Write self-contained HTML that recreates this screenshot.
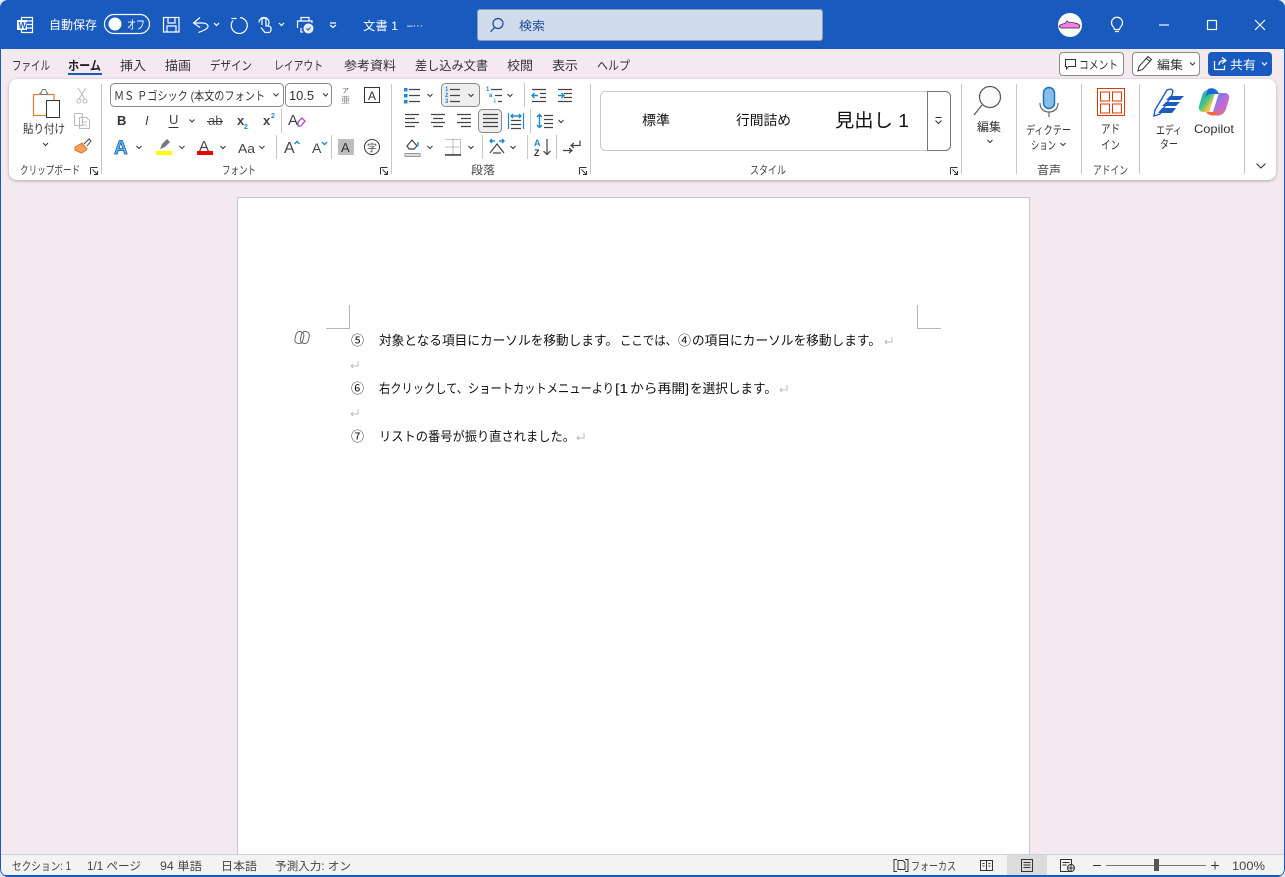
<!DOCTYPE html>
<html lang="ja"><head><meta charset="utf-8"><title>文書 1 - Word</title>
<style>
html,body{margin:0;padding:0;width:1285px;height:877px;overflow:hidden;background:#e8e8e8}
#win{position:absolute;left:0;top:0;width:1285px;height:877px;background:#f3e9ef;border-radius:8px;overflow:hidden;box-sizing:border-box;}
#title{position:absolute;left:0;top:0;width:1285px;height:49px;background:#185abd}
#search{position:absolute;left:477px;top:9px;width:346px;height:32px;box-sizing:border-box;background:#d0dbec;border:1px solid #8c9db8;border-radius:3px}
#ribbon{position:absolute;left:9px;top:79px;width:1267px;height:101px;background:#fff;border-radius:8px;box-shadow:0 1px 3px rgba(0,0,0,.28)}
#page{position:absolute;left:237px;top:197px;width:793px;height:670px;box-sizing:border-box;background:#fff;border:1px solid #c8c6c8}
#status{position:absolute;left:0;top:854px;width:1285px;height:23px;box-sizing:border-box;background:#f3f3f3;border-top:1px solid #d0d0d0;border-bottom:2px solid #185abd}
#edge{position:absolute;left:0;top:0;width:1285px;height:877px;box-sizing:border-box;border:1px solid #185abd;border-radius:8px;pointer-events:none}
svg{position:absolute;left:0;top:0}
text{font-family:"Liberation Sans","Noto Sans CJK JP",sans-serif;font-size:12px;fill:#333;white-space:pre}
.t{fill:#fff}
.tab{font-size:12.5px;fill:#333}
.lab{font-size:11.5px;fill:#444}
.doc{font-size:13px;fill:#111}
.st{font-size:11.5px;fill:#444}
.k{stroke:#333;fill:none;stroke-width:1}
.g{stroke:#444;fill:none;stroke-width:1.2}
.b{stroke:#1e88d2;fill:none;stroke-width:1.4}
.w{stroke:#fff;fill:none;stroke-width:1.2}
.s{stroke:#c8c8c8;fill:none;stroke-width:1}
.c{stroke:#333;fill:none;stroke-width:1}
.r{stroke:#bbb;fill:none;stroke-width:1}
</style></head><body>
<div id="win">
<div id="title"></div>
<div id="search"></div>
<div id="ribbon"></div>
<div id="page"></div>
<div id="status"></div>
<svg width="1285" height="877" viewBox="0 0 1285 877" xmlns="http://www.w3.org/2000/svg">
<defs>
<linearGradient id="cp" x1="0" y1="0" x2="1" y2="1"><stop offset="0" stop-color="#1d9fe0"/><stop offset=".45" stop-color="#3cc48a"/><stop offset=".7" stop-color="#f6c544"/><stop offset="1" stop-color="#f0603a"/></linearGradient>
<linearGradient id="cp2" x1="0" y1="0" x2="1" y2="1"><stop offset="0" stop-color="#3f8fe8"/><stop offset=".5" stop-color="#b86ae0"/><stop offset="1" stop-color="#f07070"/></linearGradient>
</defs>

<!-- Title bar -->
<path class="w" d="M21.5 17.5h11v15h-11z"/><path class="w" d="M27 21h5.500M27 24.500h5.500M27 28h5.500"/>
<rect x="17" y="20" width="10" height="10" fill="#fff"/><text x="18.500" y="28.500" style="font-size:9px;font-weight:700;fill:#185abd">W</text>
<text class="t" x="49" y="29" lengthAdjust="spacingAndGlyphs" textLength="48">自動保存</text>
<rect x="104.500" y="14.500" width="45" height="19" rx="9.500" class="w"/><circle cx="115" cy="24" r="6.500" fill="#fff"/>
<text class="t" x="127" y="29" lengthAdjust="spacingAndGlyphs" textLength="18">オフ</text>
<path class="w" stroke-width="1.200" d="M163.500 17.500h15.500v14.500h-15.500zM168 17.500v5.500h7v-5.500M167 32v-6h9v6"/>
<path class="w" stroke-width="1.300" d="M200 17.500l-6.500 5.500 6.500 4.500M193.500 23h8.500c4 0 6 1.500 6 3.500 0 2-4 4-9.500 6"/>
<path class="w" d="M214 23l2.500 2.500 2.500-2.500"/>
<path class="w" stroke-width="1.300" d="M236.500 18.500h-5M233 20.500A8 8 0 1 0 240 17.500"/>
<path class="w" d="M259 22.500a5 5 0 0 1 10 0 3 3 0 0 1-1 2.500M262 25v-5a2 2 0 0 1 4 0v6h2.500a2.500 2.500 0 0 1 2.500 2.500v1.500a2.500 2.500 0 0 1-2.500 2.500h-3.500l-4-5"/>
<path class="w" d="M279 23l2.500 2.500 2.500-2.500"/>
<path class="w" d="M301 21v-3.500h8v3.500M297.500 28v-7h14.500v2M301 28v4h2"/><circle cx="308.500" cy="28.500" r="4.500" fill="#dfe8f5" stroke="#fff"/><path d="M306.500 28.500l1.500 1.500 2.500-2.500" fill="none" stroke="#185abd"/>
<path class="w" d="M330 23h6M330 25l3 2.500 3-2.500"/>
<text class="t" x="363" y="30" lengthAdjust="spacingAndGlyphs" textLength="35" style="font-size:12px">文書 1</text>
<text class="t" x="407" y="29" style="font-size:11px" lengthAdjust="spacingAndGlyphs" textLength="16">–···</text>

<circle cx="498" cy="23.500" r="5" fill="none" stroke="#1b4b96" stroke-width="1.200"/><path d="M494.500 27.500l-4 4.500" stroke="#1b4b96" stroke-width="1.200"/>
<text x="519" y="30" lengthAdjust="spacingAndGlyphs" textLength="26" style="fill:#1b4b96">検索</text>

<circle cx="1070" cy="25" r="12" fill="#fdfdfb"/>
<path d="M1059 26.500c1-2.500 4-2.500 6-3l2-2.500 2 1.500c4 0 9 .5 11 3l-1 2.500h-18z" fill="#f67df0" stroke="#222" stroke-width=".7"/>
<path class="w" d="M1113 26.500a5.500 5.500 0 1 1 8 0c-1 1-1.300 2-1.500 3h-5c-.2-1-.5-2-1.500-3zM1115 31.500h4"/>
<path class="w" d="M1159 25h10"/><rect x="1207.500" y="20.500" width="9" height="9" class="w"/><path class="w" d="M1255 20l10 10M1265 20l-10 10"/>

<!-- Tabs -->
<text class="tab" x="12" y="70" lengthAdjust="spacingAndGlyphs" textLength="38">ファイル</text>
<text class="tab" x="68" y="70" lengthAdjust="spacingAndGlyphs" textLength="33" style="font-weight:700;fill:#222">ホーム</text>
<rect x="68" y="73" width="34" height="2" fill="#185abd"/>
<text class="tab" x="120" y="70" lengthAdjust="spacingAndGlyphs" textLength="26">挿入</text>
<text class="tab" x="165" y="70" lengthAdjust="spacingAndGlyphs" textLength="26">描画</text>
<text class="tab" x="210" y="70" lengthAdjust="spacingAndGlyphs" textLength="42">デザイン</text>
<text class="tab" x="274" y="70" lengthAdjust="spacingAndGlyphs" textLength="49">レイアウト</text>
<text class="tab" x="344" y="70" lengthAdjust="spacingAndGlyphs" textLength="52">参考資料</text>
<text class="tab" x="415" y="70" lengthAdjust="spacingAndGlyphs" textLength="73">差し込み文書</text>
<text class="tab" x="507" y="70" lengthAdjust="spacingAndGlyphs" textLength="26">校閲</text>
<text class="tab" x="552" y="70" lengthAdjust="spacingAndGlyphs" textLength="26">表示</text>
<text class="tab" x="597" y="70" lengthAdjust="spacingAndGlyphs" textLength="33">ヘルプ</text>

<rect x="1059.500" y="52.500" width="64" height="23" rx="3.500" fill="#fff" stroke="#8a8a8a"/>
<path class="k" d="M1065.500 59.500h10v7h-7l-2 2.500v-2.500h-1z"/>
<text x="1079" y="69" lengthAdjust="spacingAndGlyphs" textLength="39">コメント</text>
<rect x="1132.500" y="52.500" width="67" height="23" rx="3.500" fill="#fff" stroke="#8a8a8a"/>
<path class="k" d="M1138 71l1-4.500 9-10 3.500 3-9 10zM1146.500 58.500l3.500 3"/>
<text x="1157" y="69" lengthAdjust="spacingAndGlyphs" textLength="26">編集</text><path class="c" d="M1190 62.500l2.500 2.500 2.500-2.500"/>
<rect x="1208" y="52" width="64" height="24" rx="4" fill="#185abd"/>
<path class="w" d="M1214.500 61v8.500h10v-4M1219 65c0-3 2-4.500 5.500-4.500M1222 57.500l4 3-4 3"/>
<text class="t" x="1230" y="69" lengthAdjust="spacingAndGlyphs" textLength="26">共有</text><path class="w" d="M1262 62.500l2.500 2.500 2.500-2.500"/>

<!-- Separators -->
<path class="s" d="M101.500 84v90M391.500 84v90M590.500 84v90M961.500 84v90M1016.500 84v90M1081.500 84v90M1139.500 84v90M1244.500 84v90"/>
<path class="s" d="M281.500 109v24M276.500 135v24M331.500 135v24M524.500 83v24M530.500 109v24M482.500 135v24M527.500 135v24M556.500 135v24"/>

<!-- Clipboard -->
<path d="M33.500 94.500h6l1-2h6.500l1 2h6v21h-20.500z" fill="#fff" stroke="#d9873a" stroke-width="1.300"/>
<path d="M40.500 94.500l2-5h3l2 5z" fill="#fff" stroke="#777"/>
<rect x="46.500" y="100.500" width="13" height="17" fill="#fff" stroke="#333"/>
<text x="23" y="133" lengthAdjust="spacingAndGlyphs" textLength="42">貼り付け</text><path class="c" d="M43 143l2.500 2.500 2.500-2.500"/>
<path class="r" stroke="#b5b5b5" d="M78 88l7 11M86 88l-7 11"/><circle cx="79" cy="101" r="2" class="r"/><circle cx="85" cy="101" r="2" class="r"/>
<path class="r" d="M74.500 113.500h8l0 12h-8zM79.500 117.500h7l3 3v8h-10zM82 122h5M82 125h5"/>
<path d="M75 147l7-4 5 6-5 4-3-1-4-2z" fill="#f3a35c" stroke="#d9732a"/><path d="M84 144l5-5 2 2-4 5" fill="#fff" stroke="#444"/>
<text class="lab" x="20" y="174" lengthAdjust="spacingAndGlyphs" textLength="60">クリップボード</text>
<path class="k" stroke="#555" d="M90.500 167.500h7M90.500 167.500v7M92.500 169.500l5 5M94 174.500h3.500v-3.500"/>

<!-- Font -->
<rect x="110.500" y="83.500" width="173" height="23" rx="4" fill="#fff" stroke="#8a8a8a"/>
<text x="114" y="100" lengthAdjust="spacingAndGlyphs" textLength="151" style="font-size:12px">ＭＳ Ｐゴシック (本文のフォント</text>
<path class="c" d="M273.500 93.500l2.500 2.500 2.500-2.500"/>
<rect x="285.500" y="83.500" width="46" height="23" rx="4" fill="#fff" stroke="#8a8a8a"/>
<text x="289" y="100" lengthAdjust="spacingAndGlyphs" textLength="25" style="font-size:12.500px">10.5</text>
<path class="c" d="M323 93.500l2.500 2.500 2.500-2.500"/>
<text x="342" y="93" style="font-size:7px;fill:#666">ア</text><text x="341" y="103" style="font-size:9px;fill:#888">亜</text>
<rect x="364.500" y="87.500" width="15" height="15" fill="none" stroke="#333"/><text x="368" y="100" style="font-size:12px">A</text>

<text x="117" y="125" style="font-size:13px;font-weight:700">B</text>
<text x="145" y="125" style="font-size:13px;font-style:italic;fill:#444">I</text>
<text x="169" y="124" style="font-size:13px;fill:#444">U</text><path class="c" d="M168.500 127.500h10"/>
<path class="c" d="M189.500 119.500l2.500 2.500 2.500-2.500"/>
<text x="208" y="125" style="font-size:13px;fill:#555">ab</text><path class="c" d="M207 121.500h16"/>
<text x="237" y="125" style="font-size:13px;font-weight:700;fill:#444">x</text><text x="244" y="129" style="font-size:7px;fill:#1e88d2;font-weight:700">2</text>
<text x="263" y="125" style="font-size:13px;font-weight:700;fill:#444">x</text><text x="271" y="118" style="font-size:7px;fill:#1e88d2;font-weight:700">2</text>
<text x="288" y="125" style="font-size:15px;fill:#444">A</text><path d="M298 122l4-4 3 3-4 5h-3z" fill="none" stroke="#a44cc0" stroke-width="1.300"/>

<text x="114" y="154" style="font-size:19px;font-weight:700;fill:#5fb3ea;stroke:#0f5fa8;stroke-width:.7">A</text>
<path class="c" d="M136.500 146l2.500 2.500 2.500-2.500"/>
<path d="M160 149l2-5 5-5 3 3-5 5z" fill="#777"/><rect x="156" y="151" width="16" height="4" fill="#ff0"/>
<path class="c" d="M179.500 146l2.500 2.500 2.500-2.500"/>
<text x="199" y="151" style="font-size:15px;fill:#444">A</text><rect x="197" y="151" width="16" height="4" fill="#e00"/>
<path class="c" d="M220.500 146l2.500 2.500 2.500-2.500"/>
<text x="238" y="153" lengthAdjust="spacingAndGlyphs" textLength="17" style="font-size:13px;fill:#444">Aa</text><path class="c" d="M259.500 146l2.500 2.500 2.500-2.500"/>
<text x="284" y="153" style="font-size:16px;fill:#444">A</text><path class="b" stroke-width="1" d="M294.500 144l2.500-2.500 2.500 2.500"/>
<text x="312" y="153" style="font-size:14px;fill:#444">A</text><path class="b" stroke-width="1" d="M322 142l2.500 2.500 2.500-2.500"/>
<rect x="338" y="139" width="16" height="16" fill="#bdbdbd"/><text x="341" y="152" style="font-size:13px;fill:#333">A</text>
<circle cx="372" cy="147" r="7.500" class="k" stroke="#555"/><text x="367" y="151.500" style="font-size:10px;fill:#444">字</text>
<text class="lab" x="222" y="174" lengthAdjust="spacingAndGlyphs" textLength="34">フォント</text>
<path class="k" stroke="#555" d="M380.500 167.500h7M380.500 167.500v7M382.500 169.500l5 5M384 174.500h3.500v-3.500"/>

<!-- Paragraph -->
<g fill="#1e88d2"><rect x="404" y="88" width="3.500" height="3.500"/><rect x="404" y="94" width="3.500" height="3.500"/><rect x="404" y="100" width="3.500" height="3.500"/></g>
<path class="g" d="M409 89.500h11M409 95.500h11M409 101.500h11"/><path class="c" d="M427.500 94l2.500 2.500 2.500-2.500"/>
<rect x="441.500" y="83.500" width="38" height="23" rx="4" fill="#eee" stroke="#8a8a8a"/>
<text x="445" y="91" style="font-size:6px;fill:#1e88d2;font-weight:700">1</text><text x="445" y="97" style="font-size:6px;fill:#1e88d2;font-weight:700">2</text><text x="445" y="103" style="font-size:6px;fill:#1e88d2;font-weight:700">3</text>
<path class="g" d="M450 89.500h10M450 95.500h10M450 101.500h10"/><path class="c" d="M468.500 94l2.500 2.500 2.500-2.500"/>
<text x="486" y="91" style="font-size:6px;fill:#1e88d2;font-weight:700">1</text><text x="489" y="97" style="font-size:6px;fill:#1e88d2;font-weight:700">a</text><text x="494" y="103" style="font-size:6px;fill:#1e88d2;font-weight:700">i</text>
<path class="g" d="M491 89.500h11M495 95.500h7M498 101.500h4"/><path class="c" d="M507.500 94l2.500 2.500 2.500-2.500"/>
<path class="g" d="M532 89.500h14M540 93.500h6M540 97.500h6M532 101.500h14"/><path class="b" d="M538 95.500h-6M534.500 93l-2.500 2.500 2.500 2.500"/>
<path class="g" d="M558 89.500h14M564 93.500h8M564 97.500h8M558 101.500h14"/><path class="b" d="M558 95.500h6M561.500 93l2.500 2.500-2.500 2.500"/>

<path class="g" d="M405 114.500h14M405 118.500h10M405 122.500h14M405 126.500h10"/>
<path class="g" d="M431 114.500h14M433 118.500h10M431 122.500h14M433 126.500h10"/>
<path class="g" d="M457 114.500h14M461 118.500h10M457 122.500h14M461 126.500h10"/>
<rect x="478.500" y="109.500" width="23" height="23" rx="4" fill="#eee" stroke="#8a8a8a"/>
<path class="g" d="M483 114.500h15M483 118.500h15M483 122.500h15M483 126.500h15"/>
<path d="M508.500 113v16M523.500 113v16" stroke="#1e88d2" stroke-width="1.200" fill="none"/><path class="g" d="M511 120.500h10M511 124.500h10M511 128.500h10"/><path class="b" stroke-width="1" d="M511 116h10M513 114l-2 2 2 2M519 114l2 2-2 2"/>
<path class="b" d="M539.500 115v12M537 117l2.500-2.500 2.500 2.500M537 125l2.500 2.500 2.500-2.500"/><path class="g" d="M544 115.500h9M544 119.500h9M544 123.500h9M544 127.500h9"/>
<path class="c" d="M558.500 120l2.500 2.500 2.500-2.500"/>

<path d="M405 153.500h15v3h-15z" fill="#ddd" stroke="#999"/><path class="g" d="M407 146l5-6 5 6-3 3h-5z"/><path class="b" d="M418 146v-4"/>
<path class="c" d="M427.500 146l2.500 2.500 2.500-2.500"/>
<path d="M445.500 139.500h15v15h-15M453 139.500v15M445.500 147h15" fill="none" stroke="#888" stroke-dasharray="1 1"/><path d="M445 155h16" stroke="#222" stroke-width="1.300"/>
<path class="c" d="M468.500 146l2.500 2.500 2.500-2.500"/>
<path class="g" d="M490 153l7-9 7 9M493 153h8"/><path class="b" stroke-width="1" d="M490 141h5M492 139l-2 2 2 2M504 141h-5M502 139l2 2-2 2"/>
<path class="c" d="M510.500 146l2.500 2.500 2.500-2.500"/>
<text x="534" y="146" style="font-size:9px;font-weight:700;fill:#1e88d2">A</text><text x="534" y="156" style="font-size:9px;font-weight:700;fill:#333">Z</text>
<path class="g" d="M547 139v15M543.500 151l3.500 3.500 3.500-3.500"/>
<path class="g" d="M580 140.500v5h-9M574 143l-3 2.500 3 2.500M563 150.500h9M569 148l3 2.500-3 2.500"/>
<text class="lab" x="471" y="174" lengthAdjust="spacingAndGlyphs" textLength="24">段落</text>
<path class="k" stroke="#555" d="M579.500 167.500h7M579.500 167.500v7M581.500 169.500l5 5M583 174.500h3.500v-3.500"/>

<!-- Styles -->
<rect x="600.500" y="91.500" width="350" height="59" rx="5" fill="#fff" stroke="#c9c9c9"/>
<path d="M927.500 91.500h18a5 5 0 0 1 5 5v49a5 5 0 0 1-5 5h-18z" fill="#fff" stroke="#777"/>
<path class="c" d="M935.500 117.500h6M935.500 120.500l3 3 3-3"/>
<text x="642" y="125" lengthAdjust="spacingAndGlyphs" textLength="28" style="font-size:13.500px;fill:#111">標準</text>
<text x="736" y="125" lengthAdjust="spacingAndGlyphs" textLength="55" style="font-size:13.500px;fill:#111">行間詰め</text>
<text x="835" y="127" lengthAdjust="spacingAndGlyphs" textLength="74" style="font-size:18.500px;fill:#111">見出し 1</text>
<text class="lab" x="750" y="174" lengthAdjust="spacingAndGlyphs" textLength="36">スタイル</text>
<path class="k" stroke="#555" d="M950.500 167.500h7M950.500 167.500v7M952.500 169.500l5 5M954 174.500h3.500v-3.500"/>

<!-- Edit -->
<circle cx="990" cy="97" r="10.500" fill="#fafafa" stroke="#555" stroke-width="1.200"/><path d="M982 105l-8 10" stroke="#555" stroke-width="1.200"/>
<text x="977" y="131" lengthAdjust="spacingAndGlyphs" textLength="24">編集</text><path class="c" d="M987.500 140l2.500 2.500 2.500-2.500"/>

<!-- Dictation -->
<rect x="1043.500" y="87.500" width="11" height="21" rx="5.500" fill="#86bdea" stroke="#1a6fb8" stroke-width="1.500"/>
<path d="M1040 103c0 6 4 9 9 9s9-3 9-9M1049 112v5" fill="none" stroke="#666" stroke-width="1.200"/>
<text x="1026" y="134" lengthAdjust="spacingAndGlyphs" textLength="45" style="font-size:11.500px">ディクテー</text>
<text x="1031" y="149" lengthAdjust="spacingAndGlyphs" textLength="25" style="font-size:11.500px">ション</text><path class="c" d="M1060.500 143l2.500 2.500 2.500-2.500"/>
<text class="lab" x="1037" y="174" lengthAdjust="spacingAndGlyphs" textLength="24">音声</text>

<!-- Add-in -->
<rect x="1097.500" y="88.500" width="27" height="27" fill="#fff" stroke="#d83b01" stroke-width="1"/>
<path d="M1100.500 92h9v9h-9zM1112.500 92h9v9h-9zM1100.500 104h9v9h-9zM1112.500 104h9v9h-9z" fill="none" stroke="#d83b01"/>
<text x="1101" y="133" lengthAdjust="spacingAndGlyphs" textLength="19">アド</text><text x="1101" y="149" lengthAdjust="spacingAndGlyphs" textLength="19">イン</text>
<text class="lab" x="1093" y="174" lengthAdjust="spacingAndGlyphs" textLength="35">アドイン</text>

<!-- Editor -->
<path d="M1154 116l1-6 12-20 4-1 2 2-1 4-12 19z" fill="#fff" stroke="#1c5cc0" stroke-width="1.400"/>
<path d="M1166 100h14l4-4h-14zM1162 106h14l4-4h-14zM1158 113h14l4-5h-14z" fill="#1c5cc0"/>
<text x="1156" y="134" lengthAdjust="spacingAndGlyphs" textLength="26" style="font-size:11.500px">エディ</text><text x="1160" y="148" lengthAdjust="spacingAndGlyphs" textLength="18" style="font-size:11.500px">ター</text>

<!-- Copilot -->
<path d="M1214 90c-6-2-11 1-12 6l-3 10c-1 3 1 6 4 6h6l7-22z" fill="url(#cp)"/>
<path d="M1214 115c6 2 10-1 12-6l3-10c1-3-1-6-4-6h-6l-7 22z" fill="url(#cp2)"/>
<path d="M1208 89c5-2 9 0 11 5h-8c-3 0-5 2-6 5l2-7z" fill="#1a68d8"/>
<path d="M1206 112h8c3 0 5-2 6-5l-2 6c-2 3-8 4-12-1z" fill="#f26a3d"/>
<text x="1194" y="133" lengthAdjust="spacingAndGlyphs" textLength="40">Copilot</text>
<path d="M1256.500 163.500l4.500 4.500 4.500-4.500" fill="none" stroke="#333" stroke-width="1.100"/>

<!-- Document -->
<path d="M349.500 305v23.500H326M917.500 305v23.500H941" fill="none" stroke="#b8b8b8"/>
<g fill="none" stroke="#666"><rect x="295.500" y="331.500" width="8" height="12" rx="3.500" transform="rotate(14 299 337)"/><rect x="301" y="331.500" width="8" height="12" rx="3.500" transform="rotate(14 305 337)"/></g>
<text class="doc" x="351" y="345">⑤</text>
<text class="doc" x="379" y="345" lengthAdjust="spacingAndGlyphs" textLength="239">対象となる項目にカーソルを移動します。</text>
<text class="doc" x="620" y="345" lengthAdjust="spacingAndGlyphs" textLength="57">ここでは、</text>
<text class="doc" x="678" y="345" lengthAdjust="spacingAndGlyphs" textLength="13">④</text>
<text class="doc" x="692" y="345" lengthAdjust="spacingAndGlyphs" textLength="189">の項目にカーソルを移動します。</text>
<text class="doc" x="351" y="393">⑥</text>
<text class="doc" x="379" y="393" lengthAdjust="spacingAndGlyphs" textLength="235">右クリックして、ショートカットメニューより</text>
<text class="doc" x="615" y="393" lengthAdjust="spacingAndGlyphs" textLength="13">[1</text>
<text class="doc" x="630" y="393" lengthAdjust="spacingAndGlyphs" textLength="59">から再開]</text>
<text class="doc" x="690" y="393" lengthAdjust="spacingAndGlyphs" textLength="87">を選択します。</text>
<text class="doc" x="351" y="441">⑦</text>
<text class="doc" x="379" y="441" lengthAdjust="spacingAndGlyphs" textLength="196">リストの番号が振り直されました。</text>
<g class="r"><path class="r" d="M892 337v5h-7M887 340l-2 2 2 2"/><path class="r" d="M358 361v5h-7M353 364l-2 2 2 2"/><path class="r" d="M787 385v5h-7M782 388l-2 2 2 2"/><path class="r" d="M358 409v5h-7M353 412l-2 2 2 2"/><path class="r" d="M584 433v5h-7M579 436l-2 2 2 2"/></g>

<!-- Status bar -->
<text class="st" x="12" y="870" lengthAdjust="spacingAndGlyphs" textLength="59">セクション: 1</text>
<text class="st" x="87" y="870" lengthAdjust="spacingAndGlyphs" textLength="54">1/1 ページ</text>
<text class="st" x="160" y="870" lengthAdjust="spacingAndGlyphs" textLength="42">94 単語</text>
<text class="st" x="221" y="870" lengthAdjust="spacingAndGlyphs" textLength="36">日本語</text>
<text class="st" x="275" y="870" lengthAdjust="spacingAndGlyphs" textLength="76">予測入力: オン</text>
<path class="k" d="M897 859.500h-3v12h3M905 859.500h3v12h-3"/><path class="k" d="M898 860.500h5l2 2v7h-7z"/>
<text class="st" x="911" y="870" lengthAdjust="spacingAndGlyphs" textLength="45">フォーカス</text>
<path class="k" d="M980.500 860.500h12v10h-12zM986.500 860.500v10M982.500 863.500h2M982.500 866h2M988.500 863.500h2M988.500 866h2"/>
<rect x="1007" y="855" width="40" height="20" fill="#dcdcdc"/>
<path class="k" d="M1021.500 859.500h11v12h-11zM1023.500 862.500h7M1023.500 865h7M1023.500 867.500h7"/>
<path class="k" d="M1060.500 859.500h11v12h-11zM1062.500 862.500h7M1062.500 865h4"/><circle cx="1071" cy="868" r="3.500" fill="#f3f3f3" stroke="#333"/><path class="k" d="M1067.500 868h7M1071 864.500v7"/>
<path class="k" d="M1093 865.500h8M1211 865.500h8M1215 861.500v8"/>
<path d="M1106 865.500h100" stroke="#777" fill="none"/><rect x="1154" y="859" width="5" height="12" fill="#555"/>
<text class="st" x="1232" y="870" lengthAdjust="spacingAndGlyphs" textLength="33">100%</text>
</svg>
<div id="edge"></div>
</div>
</body></html>
